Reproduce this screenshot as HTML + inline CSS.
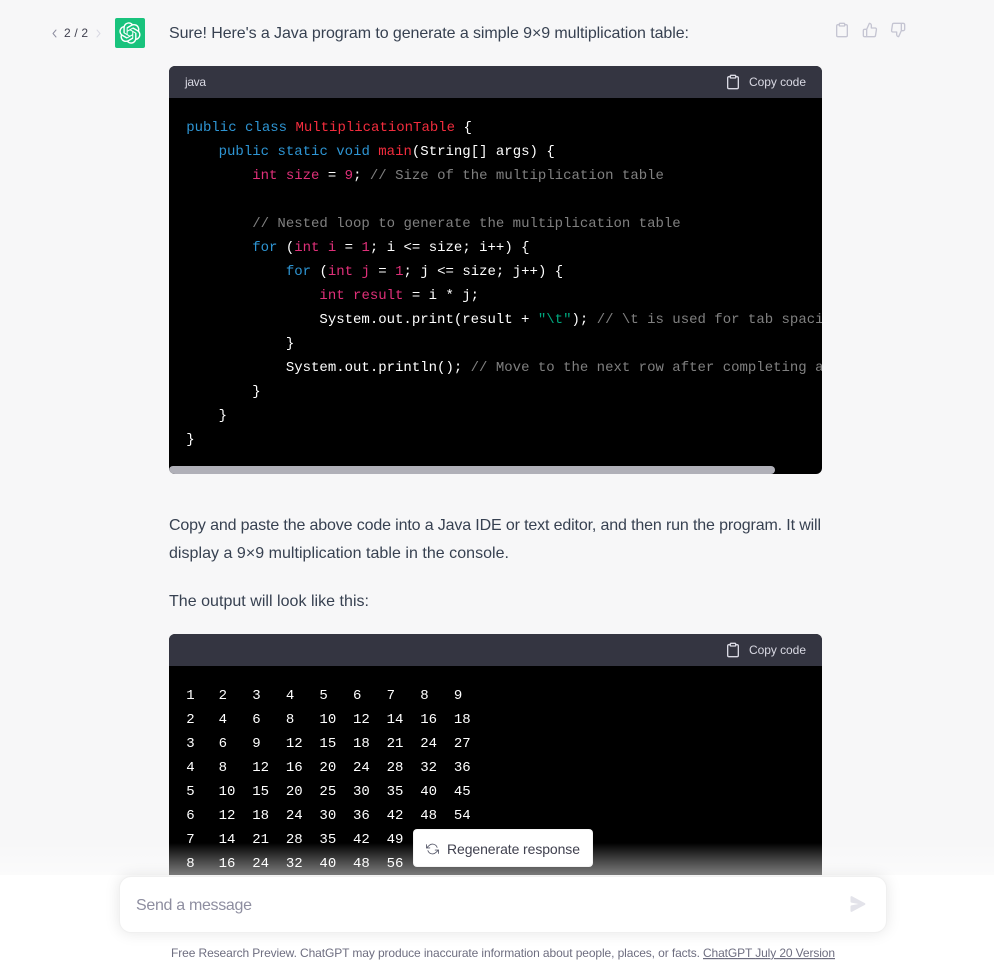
<!DOCTYPE html>
<html><head><meta charset="utf-8">
<style>
html,body{margin:0;padding:0;width:994px;height:961px;overflow:hidden;background:#f7f7f8}
.abs{position:absolute}
svg{position:absolute;left:0;top:0;overflow:visible}
svg text{font-family:"Liberation Sans",sans-serif}
.block{position:absolute;left:169px;width:653px;background:#000;border-radius:6px;overflow:hidden}
.head{position:absolute;left:0;top:0;width:653px;height:32px;background:#343541}
pre{position:absolute;left:16px;margin:0;font:14px/24px "Liberation Mono",monospace;color:#fff;tab-size:4;white-space:pre}
.k{color:#2e95d3}.t{color:#f22c3d}.p{color:#df3079}.c{color:#808080}.s{color:#00a67d}
.n{position:relative;left:1.2px}
.bar{position:absolute;left:0;top:400px;width:606px;height:8px;background:#b0b0b8;border-radius:4px}
.ic{fill:none;stroke-linecap:round;stroke-linejoin:round}
</style></head>
<body>
<svg width="994" height="961" style="z-index:1">
  <path d="M56 30l-3 3.5 3 3.5" class="ic" stroke="#8e8ea0" stroke-width="1"/>
  <path d="M97 30l3 3.5-3 3.5" class="ic" stroke="#d9d9e3" stroke-width="1"/>
  <text x="64" y="37" font-size="12" fill="#40414f" textLength="24">2 / 2</text>
  <rect x="115" y="18" width="30" height="30" rx="2" fill="#19c37d"/>
  <svg x="119" y="22" width="22" height="22" viewBox="0 0 41 41"><path fill="#fff" d="M37.5324 16.8707C37.9808 15.5241 38.1363 14.0974 37.9886 12.6859C37.8409 11.2744 37.3934 9.91076 36.676 8.68622C35.6126 6.83404 33.9882 5.3676 32.0373 4.4985C30.0864 3.62941 27.9098 3.40259 25.8215 3.85078C24.8796 2.7893 23.7219 1.94125 22.4257 1.36341C21.1295 0.785575 19.7249 0.491269 18.3058 0.500197C16.1708 0.495044 14.0893 1.16803 12.3614 2.42214C10.6335 3.67624 9.34853 5.44666 8.6917 7.47815C7.30085 7.76286 5.98686 8.3414 4.8377 9.17505C3.68854 10.0087 2.73073 11.0782 2.02839 12.312C0.956464 14.1591 0.498905 16.2988 0.721698 18.4228C0.944492 20.5467 1.83612 22.5449 3.268 24.1293C2.81966 25.4759 2.66413 26.9026 2.81182 28.3141C2.95951 29.7256 3.40701 31.0892 4.12437 32.3138C5.18791 34.1659 6.8123 35.6322 8.76321 36.5013C10.7141 37.3704 12.8907 37.5973 14.9789 37.1492C15.9208 38.2107 17.0786 39.0587 18.3747 39.6366C19.6709 40.2144 21.0755 40.5087 22.4946 40.4998C24.6307 40.5054 26.7133 39.8321 28.4418 38.5772C30.1704 37.3223 31.4556 35.5506 32.1119 33.5179C33.5027 33.2332 34.8167 32.6547 35.9659 31.821C37.115 30.9874 38.0728 29.9178 38.7752 28.684C39.8458 26.8371 40.3023 24.6979 40.0789 22.5748C39.8556 20.4517 38.9639 18.4544 37.5324 16.8707ZM22.4978 37.8849C20.7443 37.8874 19.0459 37.2733 17.6994 36.1501C17.7601 36.117 17.8666 36.0586 17.936 36.0161L25.9004 31.4156C26.1003 31.3019 26.2663 31.137 26.3813 30.9378C26.4964 30.7386 26.5563 30.5124 26.5549 30.2825V19.0542L29.9213 20.998C29.9389 21.0068 29.9541 21.0198 29.9656 21.0359C29.977 21.052 29.9842 21.0707 29.9867 21.0902V30.3889C29.9842 32.375 29.1946 34.2791 27.7909 35.6841C26.3872 37.0892 24.4838 37.8806 22.4978 37.8849ZM6.39227 31.0064C5.51397 29.4888 5.19742 27.7107 5.49804 25.9832C5.55718 26.0187 5.66048 26.0818 5.73461 26.1244L13.699 30.7248C13.8975 30.8408 14.1233 30.902 14.3532 30.902C14.583 30.902 14.8088 30.8408 15.0073 30.7248L24.731 25.1103V28.9979C24.7321 29.0177 24.7283 29.0376 24.7199 29.0556C24.7115 29.0736 24.6988 29.0893 24.6829 29.1012L16.6317 33.7497C14.9096 34.7416 12.8643 35.0097 10.9447 34.4954C9.02506 33.9811 7.38785 32.7263 6.39227 31.0064ZM4.29707 13.6194C5.17156 12.0998 6.55279 10.9364 8.19885 10.3327C8.19885 10.4013 8.19491 10.5228 8.19491 10.6071V19.808C8.19351 20.0378 8.25334 20.2638 8.36823 20.4629C8.48312 20.6619 8.64893 20.8267 8.84863 20.9404L18.5723 26.5542L15.206 28.4979C15.1894 28.5089 15.1703 28.5155 15.1505 28.5173C15.1307 28.5191 15.1107 28.516 15.0924 28.5082L7.04046 23.8557C5.32135 22.8601 4.06716 21.2235 3.55289 19.3046C3.03862 17.3858 3.30624 15.3413 4.29707 13.6194ZM31.955 20.0556L22.2312 14.4411L25.5976 12.4981C25.6142 12.4872 25.6333 12.4805 25.6531 12.4787C25.6729 12.4769 25.6928 12.4801 25.7111 12.4879L33.7631 17.1364C34.9967 17.849 36.0017 18.8982 36.6606 20.1613C37.3194 21.4244 37.6047 22.849 37.4832 24.2684C37.3617 25.6878 36.8382 27.0432 35.9743 28.1759C35.1103 29.3086 33.9415 30.1717 32.6047 30.6641C32.6047 30.5947 32.6047 30.4733 32.6047 30.3889V21.188C32.6066 20.9586 32.5474 20.7328 32.4332 20.5338C32.319 20.3348 32.154 20.1698 31.955 20.0556ZM35.3055 15.0128C35.2464 14.9765 35.1431 14.9142 35.069 14.8717L27.1045 10.2712C26.906 10.1554 26.6803 10.0943 26.4504 10.0943C26.2206 10.0943 25.9948 10.1554 25.7963 10.2712L16.0726 15.8858V11.9982C16.0715 11.9783 16.0753 11.9585 16.0837 11.9405C16.0921 11.9225 16.1048 11.9068 16.1207 11.8949L24.1719 7.25025C25.4053 6.53903 26.8158 6.19376 28.2383 6.25482C29.6608 6.31589 31.0364 6.78077 32.2044 7.59508C33.3723 8.40939 34.2842 9.53945 34.8334 10.8531C35.3826 12.1667 35.5464 13.6095 35.3055 15.0128ZM14.2424 21.9419L10.8752 19.9981C10.8576 19.9893 10.8423 19.9763 10.8309 19.9602C10.8195 19.9441 10.8122 19.9254 10.8098 19.9058V10.6071C10.8107 9.18295 11.2173 7.78848 11.9819 6.58696C12.7466 5.38544 13.8377 4.42659 15.1275 3.82264C16.4173 3.21869 17.8524 2.99464 19.2649 3.1767C20.6775 3.35876 22.0089 3.93941 23.1034 4.85067C23.0427 4.88379 22.937 4.94215 22.8668 4.98473L14.9024 9.58517C14.7025 9.69878 14.5366 9.86356 14.4215 10.0626C14.3065 10.2616 14.2466 10.4877 14.2479 10.7175L14.2424 21.9419ZM16.071 17.9991L20.4018 15.4978L24.7325 17.9975V22.9985L20.4018 25.4983L16.071 22.9985V17.9991Z"/></svg>

  <text x="169" y="38" font-size="16" fill="#374151" textLength="520">Sure! Here's a Java program to generate a simple 9×9 multiplication table:</text>
  <text x="169" y="530" font-size="16" fill="#374151" textLength="652">Copy and paste the above code into a Java IDE or text editor, and then run the program. It will</text>
  <text x="169" y="558" font-size="16" fill="#374151" textLength="340">display a 9×9 multiplication table in the console.</text>
  <text x="169" y="606" font-size="16" fill="#374151" textLength="200">The output will look like this:</text>

  <svg x="834" y="22" width="16" height="16" viewBox="0 0 24 24" class="ic" stroke="#c5c5d2" stroke-width="2"><path d="M16 4h2a2 2 0 0 1 2 2v14a2 2 0 0 1-2 2H6a2 2 0 0 1-2-2V6a2 2 0 0 1 2-2h2"/><rect x="8" y="2" width="8" height="4" rx="1"/></svg>
  <svg x="862" y="22" width="16" height="16" viewBox="0 0 24 24" class="ic" stroke="#c5c5d2" stroke-width="2"><path d="M14 9V5a3 3 0 0 0-3-3l-4 9v11h11.28a2 2 0 0 0 2-1.7l1.38-9a2 2 0 0 0-2-2.3zM7 22H4a2 2 0 0 1-2-2v-7a2 2 0 0 1 2-2h3"/></svg>
  <svg x="890" y="22" width="16" height="16" viewBox="0 0 24 24" class="ic" stroke="#c5c5d2" stroke-width="2"><path d="M10 15v4a3 3 0 0 0 3 3l4-9V2H5.72a2 2 0 0 0-2 1.7l-1.38 9a2 2 0 0 0 2 2.3zm7-13h2.67A2.31 2.31 0 0 1 22 4v7a2.31 2.31 0 0 1-2.33 2H17"/></svg>
</svg>

<div class="block" style="top:66px;height:408px">
  <div class="head"></div>
  <pre style="top:50px"><span class="n"><span class="k">public</span> <span class="k">class</span> <span class="t">MultiplicationTable</span> {</span>
    <span class="k">public</span> <span class="k">static</span> <span class="k">void</span> <span class="t">main</span>(String[] args) {
        <span class="p">int</span> <span class="p">size</span> = <span class="p">9</span>; <span class="c">// Size of the multiplication table</span>

        <span class="c">// Nested loop to generate the multiplication table</span>
        <span class="k">for</span> (<span class="p">int</span> <span class="p">i</span> = <span class="p">1</span>; i &lt;= size; i++) {
            <span class="k">for</span> (<span class="p">int</span> <span class="p">j</span> = <span class="p">1</span>; j &lt;= size; j++) {
                <span class="p">int</span> <span class="p">result</span> = i * j;
                System.out.print(result + <span class="s">"\t"</span>); <span class="c">// \t is used for tab spacing</span>
            }
            System.out.println(); <span class="c">// Move to the next row after completing a row</span>
        }
    }
<span class="n">}</span></pre>
  <div class="bar"></div>
</div>

<div class="block" style="top:634px;height:327px">
  <div class="head"></div>
  <pre style="top:50px"><span class="n">1</span>	2	3	4	5	6	7	8	9
<span class="n">2</span>	4	6	8	10	12	14	16	18
<span class="n">3</span>	6	9	12	15	18	21	24	27
<span class="n">4</span>	8	12	16	20	24	28	32	36
<span class="n">5</span>	10	15	20	25	30	35	40	45
<span class="n">6</span>	12	18	24	30	36	42	48	54
<span class="n">7</span>	14	21	28	35	42	49	56	63
<span class="n">8</span>	16	24	32	40	48	56	64	72
<span class="n">9</span>	18	27	36	45	54	63	72	81</pre>
</div>

<svg width="994" height="961" style="z-index:2">
  <text x="185" y="86" font-size="12" fill="#d9d9e3" textLength="21">java</text>
  <svg x="725" y="74" width="16" height="16" viewBox="0 0 24 24" class="ic" stroke="#d9d9e3" stroke-width="2"><path d="M16 4h2a2 2 0 0 1 2 2v14a2 2 0 0 1-2 2H6a2 2 0 0 1-2-2V6a2 2 0 0 1 2-2h2"/><rect x="8" y="2" width="8" height="4" rx="1"/></svg>
  <text x="749" y="86" font-size="12" fill="#d9d9e3" textLength="57">Copy code</text>
  <svg x="725" y="642" width="16" height="16" viewBox="0 0 24 24" class="ic" stroke="#d9d9e3" stroke-width="2"><path d="M16 4h2a2 2 0 0 1 2 2v14a2 2 0 0 1-2 2H6a2 2 0 0 1-2-2V6a2 2 0 0 1 2-2h2"/><rect x="8" y="2" width="8" height="4" rx="1"/></svg>
  <text x="749" y="654" font-size="12" fill="#d9d9e3" textLength="57">Copy code</text>
</svg>

<div class="abs" style="left:0;top:843px;width:994px;height:32px;z-index:3;background:linear-gradient(180deg,rgba(255,255,255,0),rgba(255,255,255,.5))"></div>
<div class="abs" style="left:0;top:875px;width:994px;height:86px;z-index:3;background:#fff"></div>

<div class="abs" style="left:413px;top:829px;width:180px;height:38px;z-index:4;background:#fff;border-radius:4px;box-sizing:border-box;border:1px solid rgba(0,0,0,.04)"></div>
<div class="abs" style="left:119px;top:876px;width:768px;height:57px;z-index:4;background:#fff;border-radius:12px;box-shadow:0 0 15px rgba(0,0,0,.1);border:1px solid rgba(0,0,0,.06);box-sizing:border-box"></div>

<svg width="994" height="961" style="z-index:5">
  <svg x="426" y="842.5" width="13" height="13" viewBox="0 0 24 24" class="ic" stroke="#565869" stroke-width="1.6"><polyline points="1 4 1 10 7 10"/><polyline points="23 20 23 14 17 14"/><path d="M20.49 9A9 9 0 0 0 5.64 5.64L1 10m22 4l-4.64 4.36A9 9 0 0 1 3.51 15"/></svg>
  <text x="447" y="854" font-size="14" fill="#40414f" textLength="133">Regenerate response</text>
  <text x="136" y="910" font-size="16" fill="#8e8ea0" textLength="116">Send a message</text>
  <svg x="850" y="896" width="16" height="16" viewBox="0 0 16 16"><path fill="#e3e3ea" d="M.5 1.163A1 1 0 0 1 1.97.28l12.868 6.837a1 1 0 0 1 0 1.766L1.969 15.72A1 1 0 0 1 .5 14.836V10.33a1 1 0 0 1 .816-.983L8.5 8 1.316 6.653A1 1 0 0 1 .5 5.67V1.163Z"/></svg>
  <text x="171" y="957" font-size="12" fill="#6e6e80" textLength="529">Free Research Preview. ChatGPT may produce inaccurate information about people, places, or facts.</text>
  <text x="703" y="957" font-size="12" fill="#6e6e80" text-decoration="underline" textLength="132">ChatGPT July 20 Version</text>
</svg>
</body></html>
